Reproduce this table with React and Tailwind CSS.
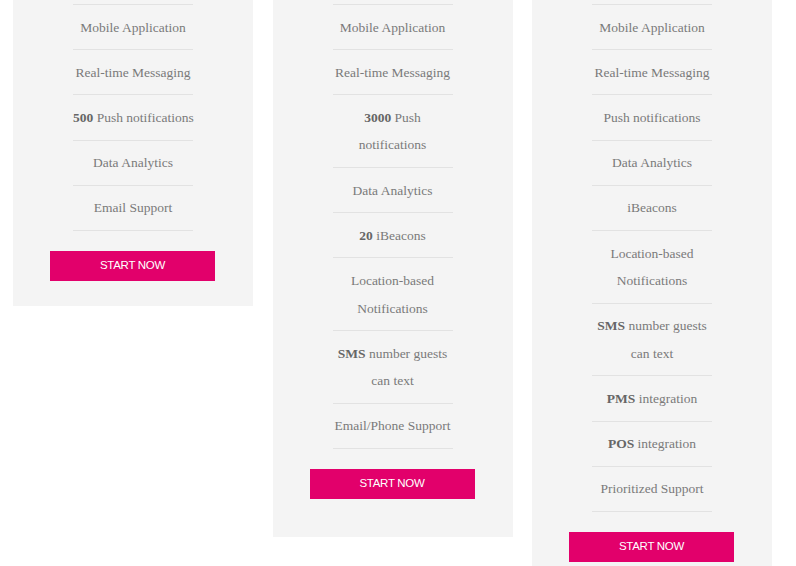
import React from 'react';

const plans = [
  {
    pad: 'pb-[25px]',
    features: [
      ['Mobile Application'],
      ['Real-time Messaging'],
      [<b key="b">500</b>, ' Push notifications'],
      ['Data Analytics'],
      ['Email Support'],
    ],
  },
  {
    pad: 'pb-[38px]',
    features: [
      ['Mobile Application'],
      ['Real-time Messaging'],
      [<b key="b">3000</b>, ' Push', <br key="br" />, 'notifications'],
      ['Data Analytics'],
      [<b key="b">20</b>, ' iBeacons'],
      ['Location-based', <br key="br" />, 'Notifications'],
      [<b key="b">SMS</b>, ' number guests', <br key="br" />, 'can text'],
      ['Email/Phone Support'],
    ],
  },
  {
    pad: 'pb-[40px]',
    features: [
      ['Mobile Application'],
      ['Real-time Messaging'],
      ['Push notifications'],
      ['Data Analytics'],
      ['iBeacons'],
      ['Location-based', <br key="br" />, 'Notifications'],
      [<b key="b">SMS</b>, ' number guests', <br key="br" />, 'can text'],
      [<b key="b">PMS</b>, ' integration'],
      [<b key="b">POS</b>, ' integration'],
      ['Prioritized Support'],
    ],
  },
];

function PlanCard({ plan }) {
  return (
    <div className={`w-[240px] shrink-0 bg-[#f4f4f4] pt-[4px] ${plan.pad}`}>
      <ul className="mx-auto w-[120px] border-t border-[#e2e2e2]">
        {plan.features.map((f, i) => (
          <li
            key={i}
            className="whitespace-nowrap border-b border-[#e2e2e2] pt-[8.6px] pb-[8.1px] text-center text-[13.5px] leading-[27.5px] text-[#7a7a7a] [&_b]:font-bold [&_b]:text-[#666]"
          >
            {f}
          </li>
        ))}
      </ul>
      <div className="mt-[20px] flex justify-center">
        <button className="mr-[1px] h-[30px] w-[165px] bg-[#e2006b] font-['Liberation_Sans',sans-serif] text-[11.5px] uppercase tracking-[-0.3px] text-white">
          Start Now
        </button>
      </div>
    </div>
  );
}

export default function App() {
  return (
    <div className="h-[566px] overflow-hidden bg-white font-['Liberation_Serif',serif]">
      <div className="flex items-start gap-[19.5px] pl-[13px]">
        {plans.map((p, i) => (
          <PlanCard key={i} plan={p} />
        ))}
      </div>
    </div>
  );
}
